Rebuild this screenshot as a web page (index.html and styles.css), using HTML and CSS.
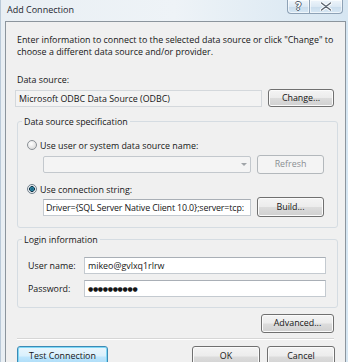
FILE: index.html
```html
<!DOCTYPE html>
<html>
<head>
<meta charset="utf-8">
<link rel="stylesheet" href="styles.css">
</head>
<body>
<div class="window">
  <div class="titlebar">
    <span class="title">Add Connection</span>
    <div class="caption">
      <span class="cbtn help"><span class="qmark">?</span></span>
      <span class="cbtn close">
        <svg width="12" height="9" viewBox="0 0 12 9"><path d="M1.5 1 L10.5 8 M10.5 1 L1.5 8" stroke="#ffffff" stroke-width="3.2" stroke-linecap="round"/><path d="M1.5 1 L10.5 8 M10.5 1 L1.5 8" stroke="#5a6470" stroke-width="1.4" stroke-linecap="round"/></svg>
      </span>
    </div>
  </div>
  <div class="client">
    <p class="intro">Enter information to connect to the selected data source or click "Change" to<br>choose a different data source and/or provider.</p>
    <div class="label ds-label">Data source:</div>
    <div class="ds-row">
      <div class="readonly">Microsoft ODBC Data Source (ODBC)</div>
      <button class="btn change">Change...</button>
    </div>
    <fieldset class="group spec">
      <legend>Data source specification</legend>
      <div class="radio-row r1"><span class="radio"></span>Use user or system data source name:</div>
      <div class="ctl-row combo-row">
        <div class="combo"><span class="arrow"></span></div>
        <button class="btn disabled refresh">Refresh</button>
      </div>
      <div class="radio-row r2"><span class="radio checked"></span>Use connection string:</div>
      <div class="ctl-row conn-row">
        <div class="textbox conn">Driver={SQL Server Native Client 10.0};server=tcp:</div>
        <button class="btn build">Build...</button>
      </div>
    </fieldset>
    <fieldset class="group login">
      <legend>Login information</legend>
      <div class="field user"><span class="flabel">User name:</span><div class="textbox wide">mikeo@gvlxq1rlrw</div></div>
      <div class="field pass"><span class="flabel">Password:</span><div class="textbox wide pw">●●●●●●●●●●</div></div>
    </fieldset>
    <div class="adv-row"><button class="btn advanced">Advanced...</button></div>
    <div class="sep"></div>
    <div class="footer">
      <button class="btn focus test">Test Connection</button>
      <button class="btn ok">OK</button>
      <button class="btn cancel">Cancel</button>
    </div>
  </div>
</div>
</body>
</html>
```
FILE: styles.css
```css
* { box-sizing: border-box; }
html, body {
  margin: 0;
  padding: 0;
  width: 348px;
  height: 362px;
  overflow: hidden;
  background: #e6edf3;
}
body {
  font-family: "Open Sans", "Noto Sans", sans-serif;
  font-size: 8.9px;
  color: #161616;
}
.window {
  width: 348px;
  height: 380px;
  display: flex;
  flex-direction: column;
  background: linear-gradient(to right, #e9eff4 0%, #eef3f7 50%, #d6e6f2 100%);
  border-left: 1px solid #b9c9d8;
}
.titlebar {
  height: 21px;
  flex: none;
  display: flex;
  align-items: flex-start;
  padding-left: 6px;
}
.title {
  line-height: 20px;
  font-size: 9px;
  color: #1e2630;
}
.caption {
  margin-left: auto;
  margin-right: 5px;
  display: flex;
}
.cbtn {
  height: 14px;
  display: flex;
  align-items: center;
  justify-content: center;
  border: 1px solid #8ea2b6;
  border-top: none;
  background: linear-gradient(#eef5fb 0%, #dce9f4 50%, #c9dcec 51%, #d6e7f4 100%);
  box-shadow: inset 0 0 0 1px rgba(255,255,255,0.6);
}
.help {
  width: 22px;
  border-radius: 0 0 0 4px;
  border-right: none;
}
.close {
  width: 34px;
  border-radius: 0 0 4px 0;
}
.qmark {
  font-family: "DejaVu Sans", sans-serif;
  font-weight: bold;
  font-size: 10px;
  line-height: 10px;
  color: #ffffff;
  text-shadow: 1px 0 0 #55606c, -1px 0 0 #55606c, 0 1px 0 #55606c, 0 -1px 0 #55606c;
}
.client {
  flex: 1;
  margin-left: 4px;
  margin-right: 2px;
  border: 1px solid #8c959d;
  border-bottom: none;
  background: #f0f0f0;
  padding: 12px 7px 0 11px;
}
.intro {
  margin: 0;
  line-height: 12.2px;
  white-space: nowrap;
}
.label {
  line-height: 11px;
}
.ds-label {
  margin-top: 16px;
}
.ds-row {
  margin-top: 4px;
  height: 18px;
  display: flex;
  align-items: flex-end;
}
.readonly {
  margin-left: -2px;
  width: 247px;
  height: 17px;
  border: 1px solid #d4d8dc;
  background: #f3f3f3;
  padding-left: 3px;
  line-height: 15px;
  white-space: nowrap;
}
.btn {
  font-family: inherit;
  font-size: inherit;
  color: #161616;
  padding: 0;
  margin: 0;
  border: 1px solid #707070;
  border-radius: 3px;
  background: linear-gradient(#f4f4f4 0%, #ececec 48%, #dcdcdc 52%, #d0d0d0 100%);
  box-shadow: inset 0 0 0 1px #fbfbfb;
  line-height: 1;
  text-align: center;
}
.change {
  margin-left: auto;
  margin-right: 4px;
  width: 66px;
  height: 18px;
}
.group {
  margin: 0;
  padding: 0 0 0 0;
  border: 1px solid #d5dce2;
  border-radius: 3px;
  min-width: 0;
}
.group legend {
  margin-left: 4px;
  padding: 0 2px;
  line-height: 11px;
}
.spec {
  margin-top: 9px;
  padding-bottom: 10px;
}
.radio-row {
  height: 12px;
  display: flex;
  align-items: center;
  padding-left: 9px;
  white-space: nowrap;
}
.r1 { margin-top: 12px; }
.r2 { margin-top: 9px; }
.radio {
  width: 10px;
  height: 10px;
  border-radius: 50%;
  border: 1px solid #8b9096;
  background: radial-gradient(circle at 40% 35%, #ffffff 0%, #e4e4e4 60%, #cfcfcf 100%);
  margin-right: 3px;
  flex: none;
}
.radio.checked {
  background: radial-gradient(circle at 50% 50%, #1f5a74 0%, #2b86a6 30%, #0f3346 45%, #e6eaee 55%, #f7f7f7 100%);
  border-color: #6f7e8a;
}
.ctl-row {
  display: flex;
  align-items: center;
  padding-left: 25px;
}
.combo-row {
  margin-top: 4px;
  height: 19px;
}
.combo {
  width: 208px;
  height: 17px;
  border: 1px solid #c3c8cd;
  border-radius: 2px;
  background: #f4f4f4;
  display: flex;
  align-items: center;
  justify-content: flex-end;
  padding-right: 3px;
}
.arrow {
  width: 0;
  height: 0;
  border-left: 3px solid transparent;
  border-right: 3px solid transparent;
  border-top: 3px solid #a0a4a8;
}
.refresh {
  margin-left: 6px;
  width: 67px;
  height: 19px;
}
.btn.disabled {
  border-color: #b3b8bc;
  background: #f4f4f4;
  box-shadow: none;
  color: #8b8f93;
}
.conn-row {
  margin-top: 2px;
  height: 20px;
}
.textbox {
  height: 17px;
  border: 1px solid #c4cad0;
  border-top-color: #a9afb6;
  background: #ffffff;
  padding-left: 3px;
  line-height: 15px;
  white-space: nowrap;
  overflow: hidden;
}
.conn {
  width: 208px;
  padding-left: 2px;
  letter-spacing: -0.15px;
}
.build {
  margin-left: 6px;
  width: 67px;
  height: 20px;
}
.login {
  margin-top: 6px;
  padding-bottom: 10px;
}
.field {
  display: flex;
  align-items: center;
  padding-left: 10px;
}
.user { margin-top: 12px; }
.pass { margin-top: 6px; }
.flabel {
  width: 56px;
  flex: none;
}
.wide {
  width: 242px;
}
.pw {
  font-family: "DejaVu Sans", sans-serif;
  font-size: 6px;
  letter-spacing: -0.3px;
  line-height: 15px;
}
.adv-row {
  margin-top: 6px;
  display: flex;
  justify-content: flex-end;
  padding-right: 4px;
}
.advanced {
  width: 73px;
  height: 19px;
}
.sep {
  margin-top: 5px;
  margin-right: 4px;
  height: 2px;
  border-top: 1px solid #d6d6d6;
  border-bottom: 1px solid #ffffff;
}
.footer {
  margin-top: 6px;
  display: flex;
  gap: 7px;
  padding-right: 3px;
}
.test {
  width: 91px;
  height: 21px;
  margin-right: auto;
}
.btn.focus {
  border-color: #3c8ab5;
  background: linear-gradient(#eaf6fd 0%, #d9f0fc 48%, #bee6fd 52%, #a7d9f5 100%);
  box-shadow: inset 0 0 0 1px #7fd8f6;
}
.ok, .cancel {
  width: 68px;
  height: 21px;
}
```
